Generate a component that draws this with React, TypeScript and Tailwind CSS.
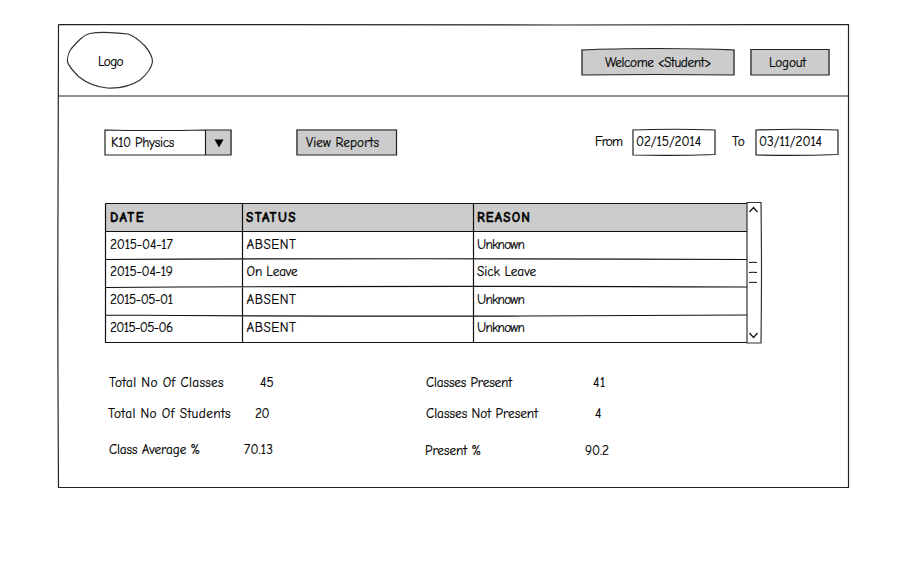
import { useLayoutEffect, useRef, useState } from "react";
import type { ReactNode } from "react";

/** Text whose letter spacing is adjusted so that the line spans `width` pixels. */
function Label({ children, width, className = "" }: { children: string; width: number; className?: string }) {
  const ref = useRef<HTMLSpanElement>(null);
  const [spacing, setSpacing] = useState(0);
  useLayoutEffect(() => {
    if (!ref.current) return;
    const natural = ref.current.getBoundingClientRect().width - spacing * children.length;
    setSpacing((width - natural) / children.length);
  }, [children, width]);
  return (
    <span ref={ref} className={`relative inline-block whitespace-pre ${className}`} style={{ letterSpacing: `${spacing}px` }}>
      {children}
    </span>
  );
}

/** Hand-drawn strokes laid over the box that contains them. */
function Sketch({ d, color = "#222" }: { d: string; color?: string }) {
  return (
    <svg className="pointer-events-none absolute inset-0 h-full w-full overflow-visible" fill="none" stroke={color} strokeWidth="1.2">
      <path d={d} />
    </svg>
  );
}

function Box({ d, className, children }: { d: string; className: string; children: ReactNode }) {
  return (
    <div className={`relative flex h-[26px] shrink-0 items-center ${className}`}>
      {children}
      <Sketch d={d} />
    </div>
  );
}

const rows = [
  { date: "2015-04-17", status: "ABSENT", sw: 50, reason: "Unknown", rw: 47, h: "h-[27px]" },
  { date: "2015-04-19", status: "On Leave", sw: 51, reason: "Sick Leave", rw: 59, h: "h-[28px]" },
  { date: "2015-05-01", status: "ABSENT", sw: 50, reason: "Unknown", rw: 47, h: "h-[28px]" },
  { date: "2015-05-06", status: "ABSENT", sw: 50, reason: "Unknown", rw: 47, h: "h-[28px]" },
];

export default function App() {
  return (
    <main className="h-[583px] w-[912px] overflow-hidden bg-white pt-6 pl-[58px] font-['Comic_Sans_MS','Comic_Neue',Lato,sans-serif] text-[13.25px] leading-[18px] text-black [-webkit-text-stroke:0.2px_#000]">
      <div className="relative h-[464px] w-[791px]">
        <Sketch d="M.5 .5Q250 1.500 500 1T790.500 .5Q791 230 790.500 463.500Q400 464 .5 463.500Q-.5 300 0 180T.5 .5M0 72H790.500" />

        <header className="flex h-[72px] items-center pl-[9px]">
          <div className="relative flex h-14 w-[86px] items-center pt-[3px] pl-[31px]">
            <Label width={25}>Logo</Label>
            <Sketch
              color="#333"
              d="M.5 30C0 26 2 20 4 17C10 10 16 3 23 1.500C33-.5 52 1 61 2C68 4 73 9 78 14C83 20 85.500 26 85.500 30C84 38 79 43 73 48C64 54 51 56.500 40 56C28 55 20 51 12 45C8 41 2 35 .5 30"
            />
          </div>
          <Box className="mt-[4px] ml-[428px] w-[154px] bg-[#ccc] pl-[24px]" d="M1 1Q30 -.5 76 -.5T153 1V26Q75 25 1 26Z">
            <Label width={106} className="top-px">{"Welcome <Student>"}</Label>
          </Box>
          <Box className="mt-[4px] ml-[15px] w-[80px] bg-[#ccc] pl-[19px]" d="M1 .5H79V26H1Z">
            <Label width={37} className="top-px">Logout</Label>
          </Box>
        </header>

        <section className="flex h-[59px] items-end pl-[46px]">
          <Box className="w-[128px] pl-[7px]" d="M1 1Q50 2 101.500 1H127V26H1ZM101.500 1V26">
            <Label width={63} className="top-px">K10 Physics</Label>
            <div className="mt-px ml-auto flex h-[25px] w-[26px] items-center justify-center bg-[#ccc] pr-px pt-px">
              <svg width="10" height="9">
                <path d="M.5 .5H9.500L5 8.500Z" fill="#000" />
              </svg>
            </div>
          </Box>
          <Box className="ml-[64px] w-[101px] bg-[#ccc] pl-[10px]" d="M1 1H100.500V26H1Z">
            <Label width={73} className="top-px">View Reports</Label>
          </Box>
          <Label className="mb-[4px] ml-[198px]" width={27}>From</Label>
          <Box className="ml-[10px] w-[84px] pl-[4px]" d="M1 1Q40-.5 83 1V25.500Q42 27 1 26Z">
            <Label width={65}>02/15/2014</Label>
          </Box>
          <Label className="mb-[4px] ml-[16px]" width={13}>To</Label>
          <Box className="ml-[10px] w-[84px] pl-[4px]" d="M1 1Q40-.5 83 1V25.500Q42 27 1 26Z">
            <Label width={63}>03/11/2014</Label>
          </Box>
        </section>

        <section className="mt-[47px] ml-[47px] flex h-[142px]">
          <div className="relative mt-[2px] h-[139px] w-[642px]">
            <div className="grid h-7 grid-cols-[137px_231px_1fr] items-center bg-[#ccc] font-bold [-webkit-text-stroke:0.45px_#000]">
              <div className="pl-[5px]"><Label width={35}>DATE</Label></div>
              <div className="pl-1"><Label width={51}>STATUS</Label></div>
              <div className="pl-[4px]"><Label width={54}>REASON</Label></div>
            </div>
            {rows.map((row) => (
              <div key={row.date} className={`grid grid-cols-[137px_231px_1fr] items-center ${row.h}`}>
                <div className="pl-[5px]"><Label width={62.5} className="-top-px">{row.date}</Label></div>
                <div className="pl-[4.5px]"><Label width={row.sw} className="-top-px">{row.status}</Label></div>
                <div className="pl-[4px]"><Label width={row.rw} className="-top-px">{row.reason}</Label></div>
              </div>
            ))}
            <Sketch
              color="#111"
              d="M.5 -.5H642M.5 -.5V138.500H642M.5 27.500H642M.5 55.500Q320 54 642 55.500M.5 83.500Q300 81.500 642 83M.5 111Q200 112.500 420 112T642 111M137.500 -.5V138.500M368.500 -.5V138.500"
            />
          </div>
          <div className="relative h-[142px] w-[15px] bg-white">
            <Sketch color="#333" d="M0 .5H14Q15 70 14 141H0Z" />
            <Sketch
              color="#111"
              d="M2.500 10L6.500 5.500L10.500 10M2.500 131L6.500 135.500L10.500 131M2 60.500Q6 60 10 60.500M2 70.500Q6 70 10 70.500M2 80.500Q6 80 10 80.500"
            />
          </div>
        </section>

        <section className="grid grid-cols-[135px_182px_160px_auto] grid-rows-[31px_36px_20px] pt-[30px] pl-[50px]">
          <div className="pl-[1px]"><Label width={115}>Total No Of Classes</Label></div>
          <div className="pl-[17px]"><Label width={14}>45</Label></div>
          <div className="pl-[1px]"><Label width={86}>Classes Present</Label></div>
          <div className="pl-[8px]"><Label width={13}>41</Label></div>
          <div><Label width={123}>Total No Of Students</Label></div>
          <div className="pl-[12px]"><Label width={14}>20</Label></div>
          <div className="pl-[1px]"><Label width={112}>Classes Not Present</Label></div>
          <div className="pl-[10px]"><Label width={8}>4</Label></div>
          <div className="pl-[1px]"><Label width={91}>Class Average %</Label></div>
          <div className="pl-[1px]"><Label width={29}>70.13</Label></div>
          <div className="pt-px"><Label width={56}>Present %</Label></div>
          <div className="pt-px"><Label width={24}>90.2</Label></div>
        </section>
      </div>
    </main>
  );
}
